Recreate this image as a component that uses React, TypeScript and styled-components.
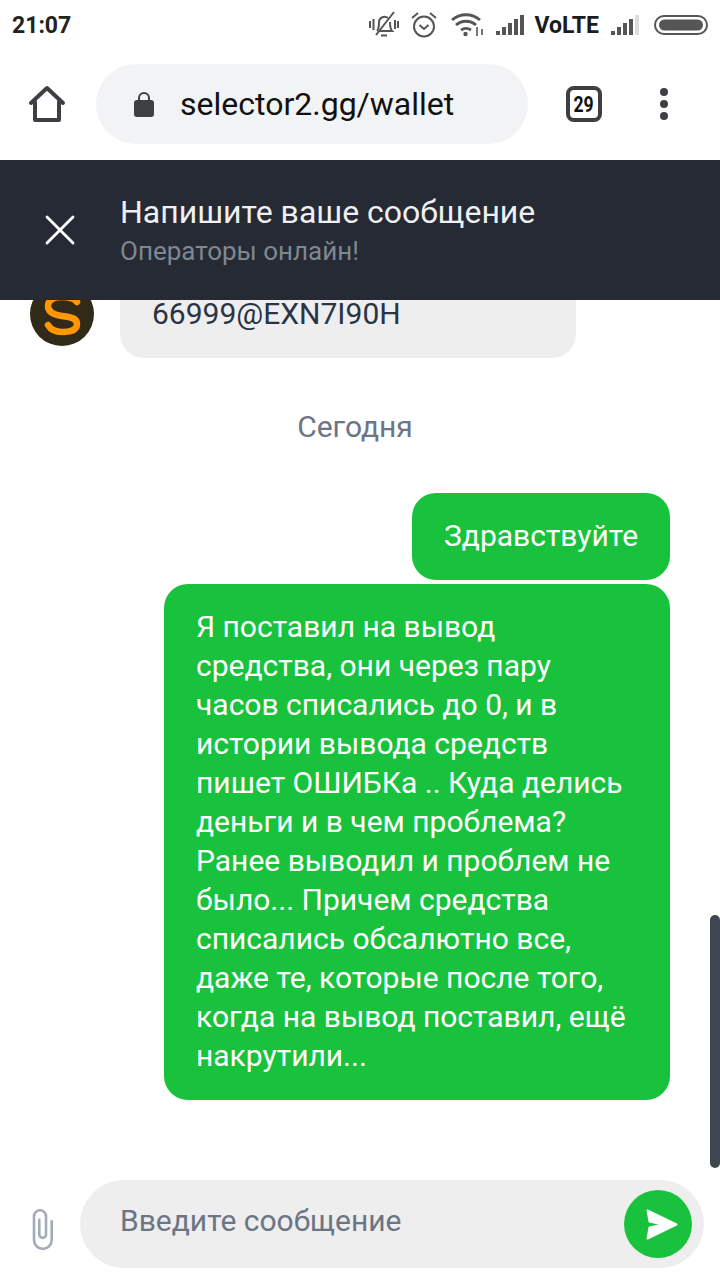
import React from "react";
import { createGlobalStyle, styled } from "styled-components";
import { X } from "lucide-react";

const GlobalStyle = createGlobalStyle`
  html, body {
    margin: 0;
    padding: 0;
    background: #fff;
  }
  * {
    box-sizing: border-box;
  }
`;

const Page = styled.div`
  position: relative;
  width: 720px;
  height: 1280px;
  overflow: hidden;
  background: #fff;
  font-family: Roboto, "Liberation Sans", sans-serif;
  display: flex;
  flex-direction: column;
`;

const StatusBar = styled.div`
  height: 50px;
  flex: none;
  padding: 0 12px 0 12px;
  display: flex;
  align-items: center;
  justify-content: space-between;
`;
const Clock = styled.div`
  font-size: 23px;
  font-weight: 700;
  color: #222;
`;
const StatusIcons = styled.div`
  display: flex;
  align-items: center;
`;
const StatusIcon = styled.svg<{ $gap: number }>`
  display: block;
  margin-right: ${(p) => p.$gap}px;
`;
const Volte = styled.span`
  font-size: 23px;
  font-weight: 700;
  color: #1c1c1c;
  margin: 0 12px 0 8px;
`;

const Toolbar = styled.div`
  height: 110px;
  flex: none;
  padding: 14px 0 16px 28px;
  display: flex;
  align-items: center;
`;
const HomeWrap = styled.div`
  width: 68px;
  height: 48px;
  display: flex;
  align-items: center;
`;
const Omnibox = styled.div`
  width: 432px;
  height: 80px;
  border-radius: 40px;
  background: #f1f3f4;
  display: flex;
  align-items: center;
  padding-left: 38px;
  gap: 26px;
`;
const Url = styled.div`
  font-size: 32px;
  color: #111;
`;
const TabCount = styled.div`
  width: 36px;
  height: 36px;
  margin-left: 38px;
  border: 4px solid #3c4043;
  border-radius: 8px;
  display: flex;
  align-items: center;
  justify-content: center;
`;
const TabDigits = styled.span`
  font-size: 22px;
  font-weight: 700;
  color: #111;
  transform: scaleX(0.8);
`;
const MenuDots = styled.div`
  margin-left: 58px;
  display: flex;
  flex-direction: column;
  gap: 4px;
`;
const Dot = styled.div`
  width: 8px;
  height: 8px;
  border-radius: 50%;
  background: #3c4043;
`;

const ChatHeader = styled.div`
  height: 140px;
  flex: none;
  position: relative;
  z-index: 1;
  background: #252a35;
  display: flex;
  align-items: center;
  padding-left: 40px;
  gap: 40px;
`;
const CloseWrap = styled.div`
  width: 40px;
  height: 40px;
  color: #fff;
  display: flex;
  align-items: center;
  justify-content: center;
`;
const CloseIcon = styled(X)`
  flex: none;
`;
const HeaderText = styled.div`
  margin-top: 1px;
  display: flex;
  flex-direction: column;
  gap: 5px;
`;
const HeaderTitle = styled.div`
  font-size: 32px;
  line-height: 36px;
  color: #eef0f2;
`;
const HeaderSub = styled.div`
  font-size: 26px;
  line-height: 32px;
  color: #7f8791;
`;

const Messages = styled.div`
  flex: 1;
  min-height: 0;
  display: flex;
  flex-direction: column;
`;
const IncomingRow = styled.div`
  margin-top: -30px;
  padding-left: 30px;
  display: flex;
  gap: 26px;
  align-items: flex-start;
`;
const Avatar = styled.div`
  margin-top: 12px;
  width: 64px;
  height: 64px;
  flex: none;
`;
const IncomingBubble = styled.div`
  width: 456px;
  height: 88px;
  background: #eeeeee;
  border-radius: 24px;
  padding: 24px 32px 0;
  font-size: 30px;
  line-height: 40px;
  color: #2a3444;
`;
const DayLabel = styled.div`
  margin-top: 49px;
  margin-left: -10px;
  text-align: center;
  font-size: 30px;
  line-height: 40px;
  color: #6b7584;
`;
const OutgoingList = styled.div`
  margin-top: 46px;
  padding-right: 50px;
  display: flex;
  flex-direction: column;
  align-items: flex-end;
  gap: 4px;
`;
const OutgoingBubble = styled.div<{ $wide?: boolean }>`
  width: ${(p) => (p.$wide ? "506px" : "258px")};
  padding: 23px 32px 25px;
  border-radius: 24px;
  background: #19c23c;
  color: #fff;
  font-size: 30px;
  line-height: 39px;
`;

const ScrollThumb = styled.div`
  position: absolute;
  right: 0;
  top: 915px;
  width: 10px;
  height: 253px;
  border-radius: 5px;
  background: #3e4650;
`;

const Composer = styled.div`
  position: absolute;
  left: 0;
  right: 0;
  bottom: 0;
  height: 100px;
  padding-left: 32px;
  display: flex;
  align-items: center;
`;
const ClipWrap = styled.div`
  width: 48px;
  display: flex;
`;
const InputBox = styled.div`
  width: 624px;
  height: 88px;
  margin-bottom: 12px;
  border-radius: 44px;
  background: #eeeeee;
  display: flex;
  align-items: center;
  justify-content: space-between;
  padding: 0 12px 0 40px;
`;
const Placeholder = styled.div`
  font-size: 30px;
  line-height: 40px;
  margin-bottom: 6px;
  color: #6b7584;
`;
const SendButton = styled.div`
  width: 68px;
  height: 68px;
  border-radius: 50%;
  background: #19c23c;
  display: flex;
  align-items: center;
  justify-content: center;
  padding-left: 7px;
`;

const Bars = ({ light, gap }: { light?: boolean; gap: number }) => (
  <StatusIcon $gap={gap} width="30" height="22" viewBox="0 0 30 22" fill="#555">
    <rect x="0" y="17" width="4" height="4" />
    <rect x="6" y="13" width="4" height="8" />
    <rect x="12" y="9" width="4" height="12" />
    <rect x="18" y="5" width="4" height="16" />
    <rect x="24" y="1" width="4" height="20" fill={light ? "#ddd" : "#555"} />
  </StatusIcon>
);

const longText =
  "Я поставил на вывод средства, они через пару часов списались до 0, и в истории вывода средств пишет ОШИБКа .. Куда делись деньги и в чем проблема? Ранее выводил и проблем не было... Причем средства списались обсалютно все, даже те, которые после того, когда на вывод поставил, ещё накрутили...";

export default function App() {
  return (
    <Page>
      <GlobalStyle />
      <StatusBar>
        <Clock>21:07</Clock>
        <StatusIcons>
          <StatusIcon $gap={12} width="30" height="28" viewBox="0 0 30 28" fill="none" stroke="#555" strokeWidth="2">
            <path d="M8 20c2-2 2-5 2-9a5.500 5.500 0 0 1 9-4M21 11c0 4 0 7 2 9H10" />
            <path d="M12 24.500h6" />
            <path d="M25 1 7 24" />
            <path d="M1 10v7M4.500 8v11M26 9v9M29 10v7" />
          </StatusIcon>
          <StatusIcon $gap={14} width="26" height="28" viewBox="0 0 26 28" fill="none" stroke="#555" strokeWidth="2">
            <circle cx="13" cy="15.500" r="10" />
            <path d="M8.500 14l4.500 4 4.500-4" />
            <path d="M1 7l6-5M25 7l-6-5" />
          </StatusIcon>
          <StatusIcon $gap={12} width="33" height="24" viewBox="0 0 33 24" fill="none" stroke="#555" strokeWidth="2.800">
            <path d="M1 7c8-7 20-7 28 0" />
            <path d="M5 12c6-5 14-5 20 0" />
            <path d="M10 17c3-2 7-2 10 0" />
            <circle cx="14.500" cy="21" r="2.200" fill="#555" stroke="none" />
            <path d="M26 14v9M31 16v6" strokeWidth="1.600" />
          </StatusIcon>
          <Bars gap={0} />
          <Volte>VoLTE</Volte>
          <Bars light gap={13} />
          <svg width="54" height="20" viewBox="0 0 54 20">
            <rect x="1" y="1" width="52" height="18" rx="9" fill="none" stroke="#555" strokeWidth="2" />
            <rect x="5" y="4.500" width="44" height="11" rx="5.500" fill="#555" />
          </svg>
        </StatusIcons>
      </StatusBar>

      <Toolbar>
        <HomeWrap>
          <svg width="38" height="38" viewBox="0 0 38 38" fill="none" stroke="#3c4043" strokeWidth="4" strokeLinejoin="round" strokeLinecap="round">
            <path d="M3 18 19 3l16 15" />
            <path d="M7 17v18h24V17" />
          </svg>
        </HomeWrap>
        <Omnibox>
          <svg width="20" height="27" viewBox="0 0 20 27">
            <path d="M5 10V7a5 5 0 0 1 10 0v3" fill="none" stroke="#3c4043" strokeWidth="2" />
            <rect x="0" y="9" width="20" height="17" rx="3" fill="#3c4043" />
          </svg>
          <Url>selector2.gg/wallet</Url>
        </Omnibox>
        <TabCount>
          <TabDigits>29</TabDigits>
        </TabCount>
        <MenuDots>
          <Dot />
          <Dot />
          <Dot />
        </MenuDots>
      </Toolbar>

      <ChatHeader>
        <CloseWrap>
          <CloseIcon size={52} strokeWidth={1.3} />
        </CloseWrap>
        <HeaderText>
          <HeaderTitle>Напишите ваше сообщение</HeaderTitle>
          <HeaderSub>Операторы онлайн!</HeaderSub>
        </HeaderText>
      </ChatHeader>

      <Messages>
        <IncomingRow>
          <Avatar>
            <svg width="64" height="64" viewBox="0 0 64 64">
              <circle cx="32" cy="32" r="32" fill="#312a19" />
              <path d="M47 20c-3-4-9-5-15-5-8 0-14 3-14 9 0 7 7 9 14 10 8 1 15 2 15 8s-7 8-15 8c-6 0-11-2-14-7" fill="none" stroke="#ff9800" strokeWidth="6.500" strokeLinecap="round" />
            </svg>
          </Avatar>
          <IncomingBubble>66999@EXN7I90H</IncomingBubble>
        </IncomingRow>
        <DayLabel>Сегодня</DayLabel>
        <OutgoingList>
          <OutgoingBubble>Здравствуйте</OutgoingBubble>
          <OutgoingBubble $wide>{longText}</OutgoingBubble>
        </OutgoingList>
      </Messages>

      <ScrollThumb />

      <Composer>
        <ClipWrap>
          <svg width="22" height="42" viewBox="0 0 22 42" fill="none" stroke="#a3abb8" strokeWidth="2.600" strokeLinecap="round">
            <path d="M19.700 12.300V31a8.850 8.850 0 0 1-17.700 0V7.300a6 6 0 0 1 12 0V25.500a3.350 3.350 0 0 1-6.700 0V10.700" />
          </svg>
        </ClipWrap>
        <InputBox>
          <Placeholder>Введите сообщение</Placeholder>
          <SendButton>
            <svg width="32" height="31" viewBox="0 0 32 31" fill="#fff" stroke="#fff" strokeWidth="2" strokeLinejoin="round">
              <path d="M1.500 1.500 30.500 15.500 1.500 29.500 3.500 18.500 17 15.500 3.500 12.500z" />
            </svg>
          </SendButton>
        </InputBox>
      </Composer>
    </Page>
  );
}
